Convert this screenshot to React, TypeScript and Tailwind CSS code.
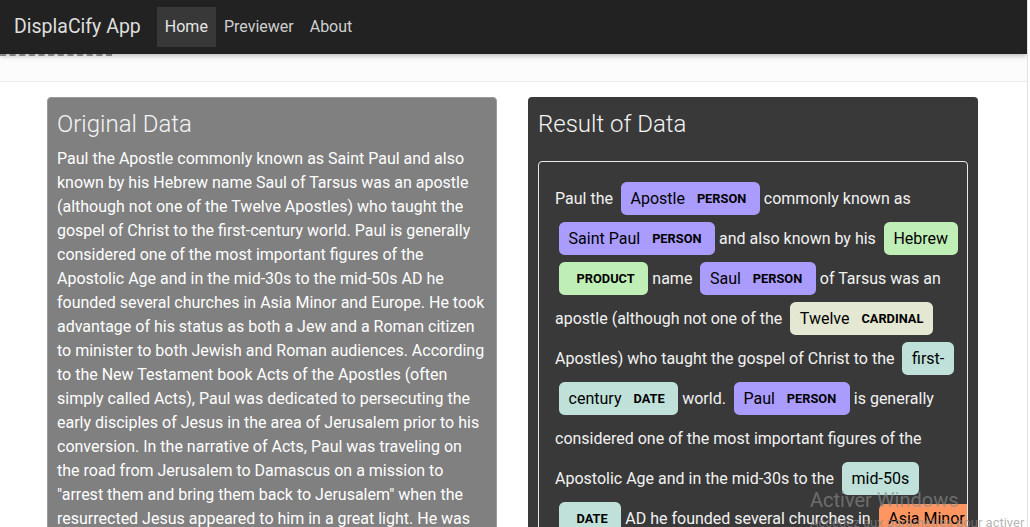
import React from "react";

type Seg = string | { t: string; l: string; hang?: boolean };

const COLORS: Record<string, string> = {
  PERSON: "#aa9cfc",
  PRODUCT: "#bfeeb7",
  CARDINAL: "#e4e7d2",
  DATE: "#bfe1d9",
  LOC: "#ff9561",
  GPE: "#feca74",
  NORP: "#c887fb",
};

const segs: Seg[] = [
  "Paul the ",
  { t: "Apostle", l: "PERSON" },
  "commonly known as ",
  { t: "Saint Paul", l: "PERSON" },
  "and also known by his ",
  { t: "Hebrew", l: "PRODUCT" },
  "name ",
  { t: "Saul", l: "PERSON" },
  "of Tarsus was an apostle (although not one of the ",
  { t: "Twelve", l: "CARDINAL" },
  "Apostles) who taught the gospel of Christ to the ",
  { t: "first-century", l: "DATE" },
  "world. ",
  { t: "Paul", l: "PERSON" },
  "is generally considered one of the most important figures of the Apostolic Age and in the mid-30s to the ",
  { t: "mid-50s", l: "DATE" },
  "AD he founded several churches in ",
  { t: "Asia Minor", l: "LOC", hang: true },
];

const rest: Seg[] = [
  "and ",
  { t: "Europe", l: "LOC" },
  ". He took advantage of his status as both a ",
  { t: "Jew", l: "NORP" },
  "and a ",
  { t: "Roman", l: "NORP" },
  "citizen to minister to both Jewish and Roman audiences.",
];

const original =
  'Paul the Apostle commonly known as Saint Paul and also known by his Hebrew name Saul of Tarsus was an apostle (although not one of the Twelve Apostles) who taught the gospel of Christ to the first-century world. Paul is generally considered one of the most important figures of the Apostolic Age and in the mid-30s to the mid-50s AD he founded several churches in Asia Minor and Europe. He took advantage of his status as both a Jew and a Roman citizen to minister to both Jewish and Roman audiences. According to the New Testament book Acts of the Apostles (often simply called Acts), Paul was dedicated to persecuting the early disciples of Jesus in the area of Jerusalem prior to his conversion. In the narrative of Acts, Paul was traveling on the road from Jerusalem to Damascus on a mission to "arrest them and bring them back to Jerusalem" when the resurrected Jesus appeared to him in a great light. He was struck blind, but after three days his sight was restored by Ananias of Damascus and Paul began to preach that Jesus of Nazareth is the Jewish Messiah and the Son of God.';

function renderSegs(list: Seg[], prefix: string) {
  return list.map((s, i) =>
    typeof s === "string" ? (
      <React.Fragment key={prefix + i}>{s}</React.Fragment>
    ) : s.hang ? (
      <mark
        key={prefix + i}
        className="inline-block w-[72px] whitespace-nowrap text-black leading-none rounded-[5.6px] py-[7.2px] px-[9.6px] ml-[4px] shadow-[30px_0_0_#ff9561]"
        style={{ background: COLORS[s.l] }}
      >
        {s.t}{" "}
        <span className="text-[12.8px] font-bold leading-none align-middle ml-[8px] uppercase">
          {s.l}
        </span>
      </mark>
    ) : (
      <mark
        key={prefix + i}
        className="text-black leading-none rounded-[5.6px] py-[7.2px] px-[9.6px] mx-[4px] box-decoration-clone"
        style={{ background: COLORS[s.l] }}
      >
        {s.t}{" "}
        <span className="text-[12.8px] font-bold leading-none align-middle ml-[8px] uppercase">
          {s.l}
        </span>{" "}
      </mark>
    )
  );
}

export default function App() {
  return (
    <div
      className="relative w-[1028px] h-[527px] overflow-hidden bg-white border-r border-[#e2e2e2]"
      style={{ fontFamily: "Roboto, 'Noto Sans', sans-serif" }}
    >
      <nav className="relative z-10 h-[54px] bg-[#222222] flex items-center pl-[14px] shadow-[0_2px_5px_rgba(0,0,0,0.25)]">
        <span className="text-[19.5px] text-[#dedede] leading-none mr-[16px]">DisplaCify App</span>
        <span className="h-[40px] flex items-center px-[8px] bg-[#383838] text-[16px] text-[#e6e6e6]">Home</span>
        <span className="h-[40px] flex items-center px-[8px] text-[16px] text-[#cfcfcf]">Previewer</span>
        <span className="h-[40px] flex items-center px-[8px] text-[16px] text-[#cfcfcf]">About</span>
      </nav>
      <div className="h-[28px] bg-[#fcfcfc] border-b border-[#ebebeb]">
        <div className="w-[112px] border-t-2 border-dashed border-[#9a9a9a]" />
      </div>
      <main className="flex gap-[31px] pl-[47px] pt-[15px]">
        <section className="w-[450px] h-[600px] bg-[#808080] rounded-[4px] border border-[#9a9a9a] px-[9px] pt-[12px]">
          <h2 className="text-[24px] font-light leading-[29px] text-[#f4f4f4] mb-[8px]">Original Data</h2>
          <p className="text-[16px] leading-[24px] text-white">{original}</p>
        </section>
        <section className="w-[450px] h-[600px] bg-[#393939] rounded-[4px] px-[10px] pt-[13px]">
          <h2 className="text-[24px] font-light leading-[29px] text-[#f4f4f4] mb-[22px]">Result of Data</h2>
          <div className="overflow-hidden border border-[#e6e9ef] rounded-[4px] px-[16px] pt-[17px] pb-[16px] text-[16px] leading-[2.5] text-[#f2f2f2]">
            {renderSegs(segs, "a")}
            <br />
            {renderSegs(rest, "b")}
          </div>
        </section>
      </main>
      <div className="absolute left-[810px] top-[490px] text-[20px] leading-none text-[rgba(140,140,140,0.65)] pointer-events-none whitespace-nowrap">
        Activer Windows
      </div>
      <div className="absolute left-[810px] top-[516px] text-[13px] leading-none text-[rgba(140,140,140,0.65)] pointer-events-none whitespace-nowrap">
        Accédez aux paramètres pour activer Windows.
      </div>
    </div>
  );
}
